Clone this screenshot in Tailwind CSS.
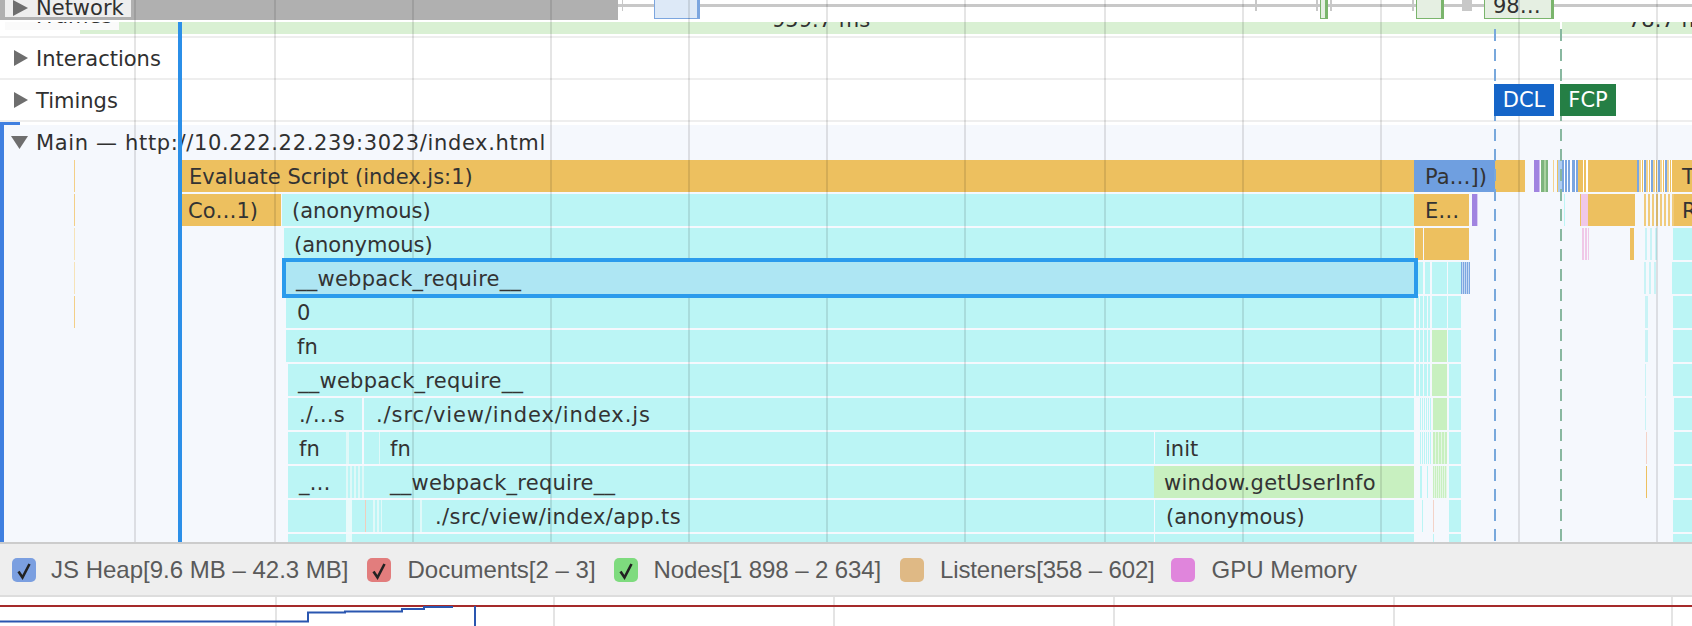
<!DOCTYPE html>
<html lang="en">
<head>
    <meta charset="UTF-8">
    <title>Performance</title>
    <script src="https://cdn.jsdelivr.net/npm/@tailwindcss/browser@4"></script>
</head>
<body class="bg-white">
<div class="w-[1692px] h-[626px] overflow-hidden flex flex-col [font-family:'DejaVu_Sans',sans-serif] text-[#303030]">

    <!-- tracks -->
    <div class="relative h-[542px] overflow-hidden shrink-0">

        <!-- overview strip -->
        <div class="relative h-5 mb-0.5 flex">
            <div class="w-[618px] h-5 bg-[#b0b0b0]">
                <div class="ml-[5px] w-[126px] h-[18px] bg-[#eeeeee] overflow-hidden flex items-center pl-2 -mt-px">
                    <svg class="shrink-0" width="15" height="16" viewBox="0 0 15 16"><path d="M0 0 L15 8 L0 16 Z" fill="#6e6e6e"/></svg>
                    <span class="ml-[8px] text-[21px] leading-5">Network</span>
                </div>
            </div>
            <div class="absolute left-[618px] right-0 top-1 h-[3px] bg-[#c8c8c8]"></div>
            <div class="absolute left-[654px] top-0 w-[46px] h-[19px] bg-[#dde9f7] border border-t-0 border-[#7ca6df] border-r-[3px]"></div>
            <div class="absolute left-[622px] top-0 w-px h-[11px] bg-[#c8c8c8]"></div>
            <div class="absolute left-[1255px] top-0 w-0.5 h-[11px] bg-[#c8c8c8]"></div>
            <div class="absolute left-[1316px] top-0 w-0.5 h-[11px] bg-[#c8c8c8]"></div>
            <div class="absolute left-[1320px] top-0 w-2 h-[19px] bg-[#e5efe2] border border-t-0 border-[#7ab56c] border-r-[3px]"></div>
            <div class="absolute left-[1330px] top-0 w-0.5 h-[11px] bg-[#c8c8c8]"></div>
            <div class="absolute left-[1412px] top-0 w-0.5 h-[11px] bg-[#c8c8c8]"></div>
            <div class="absolute left-[1416px] top-0 w-7 h-[19px] bg-[#e5efe2] border border-t-0 border-[#7ab56c] border-r-[3px]"></div>
            <div class="absolute left-[1462px] top-0 w-2.5 h-[11px] bg-[#c8c8c8]"></div>
            <div class="absolute left-[1484px] top-0 w-[70px] h-[19px] bg-[#e5efe2] border border-t-0 border-[#7ab56c] border-r-[3px] overflow-hidden pl-2 text-[21px] leading-[12px]">98…</div>
        </div>

        <!-- frames -->
        <div class="relative h-3 mb-0.5 flex overflow-hidden">
            <div class="ml-[80px] w-[1480px] bg-[#d9f0d3] relative overflow-hidden">
                <span class="absolute left-[692px] -top-[14px] text-[21px] leading-[24px]">959.7 ms</span>
            </div>
            <div class="ml-0.5 flex-1 bg-[#d9f0d3] relative overflow-hidden">
                <span class="absolute left-[66px] -top-[14px] text-[21px] leading-[24px] whitespace-nowrap">78.7 ms</span>
            </div>
            <div class="absolute left-[5px] top-0 w-[114px] h-2 bg-[#fafafa] overflow-hidden pl-[31px]">
                <span class="block -mt-[18px] text-[21px] leading-[24px]">Frames</span>
            </div>
        </div>
        <div class="h-0.5 bg-[#eeeeee]"></div>

        <div class="h-10 flex items-center pl-3.5 text-[21px] border-b-2 border-[#eeeeee] box-content">
            <svg width="14" height="16" viewBox="0 0 14 16"><path d="M0 0 L14 8 L0 16 Z" fill="#6e6e6e"/></svg>
            <span class="ml-2 pt-1">Interactions</span>
        </div>
        <div class="h-10 flex items-center text-[21px] border-b-2 border-[#eeeeee] box-content">
            <div class="w-[1494px] pl-3.5 flex items-center shrink-0">
                <svg width="14" height="16" viewBox="0 0 14 16"><path d="M0 0 L14 8 L0 16 Z" fill="#6e6e6e"/></svg>
                <span class="ml-2 pt-1">Timings</span>
            </div>
            <div class="relative z-10 w-[60px] h-8 bg-[#1565c8] text-white text-center leading-8">DCL</div>
            <div class="relative z-10 ml-1.5 w-[56px] h-8 bg-[#257f45] text-white text-center leading-8">FCP</div>
        </div>

        <!-- main thread -->
        <div class="mt-[3px] bg-[#f5f8fd] h-[417px] text-[21px] text-[#333333]">
            <div class="h-[35px] flex items-center pl-[11px] text-[#303030]">
                <svg width="17" height="13" viewBox="0 0 17 13"><path d="M0 0 L17 0 L8.5 13 Z" fill="#6e6e6e"/></svg>
                <span class="ml-2 pt-0.5 tracking-[0.65px]">Main — http://10.222.22.239:3023/index.html</span>
            </div>

            <div class="flex h-8 mb-0.5 leading-[34px]">
                <div class="ml-[74px] w-px bg-[#f3cf87]"></div>
                <div class="ml-[107px] w-[1232px] bg-[#edc05f] pl-[7px]">Evaluate Script (index.js:1)</div>
                <div class="w-[81px] bg-[#6f9fe0] pl-[11px]">Pa…])</div>
                <div class="w-[30px] bg-[#edc05f]"></div>
                <div class="ml-[9px] w-[5px] bg-[#a084e0]"></div>
                <div class="w-[49px] bg-[linear-gradient(90deg,#cdbdf0_0_1px,#fff_1px_2px,#7db47d_2px_5px,#a9d2a0_5px_7px,#7db47d_7px_9px,#f5f8fd_9px_14px,#f3d48f_14px_15px,#f5f8fd_15px_18px,#edc05f_18px_19px,#aecdf0_19px_23px,#7ba6e0_23px_25px,#fff_25px_26px,#7ba6e0_26px_28px,#fff_28px_29px,#7ba6e0_29px_31px,#fff_31px_33px,#7ba6e0_33px_36px,#fff_36px_37px,#7ba6e0_37px_39px,#edc05f_39px_44px,#fff_44px_45px,#edc05f_45px_47px,#fff_47px_49px)]"></div>
                <div class="w-[49px] bg-[#edc05f]"></div>
                <div class="w-[35px] bg-[repeating-linear-gradient(90deg,#7ba6e0_0_2px,#f3d48f_2px_4px,#fff_4px_5px,#edc05f_5px_6px,#fff_6px_7px)]"></div>
                <div class="flex-1 bg-[#edc05f] pl-2.5 overflow-hidden">T</div>
            </div>

            <div class="flex h-8 mb-0.5 leading-[34px]">
                <div class="ml-[74px] w-px bg-[#f3cf87]"></div>
                <div class="ml-[107px] w-[99px] bg-[#edc05f] pl-[6px]">Co…1)</div>
                <div class="ml-px w-[1132px] bg-[#bbf5f5] pl-[10px]">(anonymous)</div>
                <div class="w-[55px] bg-[#edc05f] pl-[11px]">E…</div>
                <div class="ml-[3px] w-[5px] bg-[#a084e0]"></div>
                <div class="w-px bg-[#d9ccf3]"></div>
                <div class="ml-[86px] w-px bg-[#bbf5f5]"></div>
                <div class="ml-[15px] w-px bg-[#edc05f]"></div>
                <div class="w-[7px] bg-[#f0c8e8]"></div>
                <div class="w-[47px] bg-[#edc05f]"></div>
                <div class="ml-[9px] w-[30px] bg-[repeating-linear-gradient(90deg,#f0cb7c_0_2px,#f5f8fd_2px_4px)]"></div>
                <div class="flex-1 bg-[#edc05f] pl-2 overflow-hidden">R</div>
            </div>

            <div class="flex h-8 mb-0.5 leading-[34px]">
                <div class="ml-[74px] w-px bg-[#f6e3b8]"></div>
                <div class="ml-[209px] w-[1130px] bg-[#bbf5f5] pl-[10px]">(anonymous)</div>
                <div class="ml-px w-2 bg-[#edc05f]"></div>
                <div class="ml-px w-[45px] bg-[#edc05f]"></div>
                <div class="ml-[113px] w-[7px] bg-[repeating-linear-gradient(90deg,#f0c8e8_0_2px,#f5f8fd_2px_3px)]"></div>
                <div class="ml-[41px] w-1 bg-[#edc05f]"></div>
                <div class="ml-[11px] w-[15px] bg-[repeating-linear-gradient(90deg,#c9f3f6_0_2px,#f5f8fd_2px_5px)]"></div>
                <div class="ml-[13px] flex-1 bg-[#bbf5f5]"></div>
            </div>

            <!-- selected entry -->
            <div class="flex h-8 mb-0.5 leading-[34px]">
                <div class="ml-[74px] w-px bg-[#f6e3b8]"></div>
                <div class="relative z-10 ml-[211px] w-[1128px] bg-[#aee6f3] outline-4 outline-[#2b9bec] pl-[10px] tracking-[0.25px]">__webpack_require__</div>
                <div class="ml-1 w-3.5 bg-[repeating-linear-gradient(90deg,#bbf5f5_0_5px,#f5f8fd_5px_7px)]"></div>
                <div class="w-[15px] bg-[#bbf5f5]"></div>
                <div class="ml-px w-[13px] bg-[#bbf5f5]"></div>
                <div class="w-[9px] bg-[repeating-linear-gradient(90deg,#7ba6e0_0_1px,#c5d8f3_1px_2px)]"></div>
                <div class="ml-[174px] w-[15px] bg-[repeating-linear-gradient(90deg,#c9f3f6_0_2px,#f5f8fd_2px_5px)]"></div>
                <div class="ml-[13px] flex-1 bg-[#bbf5f5]"></div>
            </div>

            <div class="flex h-8 mb-0.5 leading-[34px]">
                <div class="ml-[74px] w-px bg-[#f3cf87]"></div>
                <div class="ml-[211px] w-[1128px] bg-[#bbf5f5] pl-[11px]">0</div>
                <div class="ml-0.5 w-3.5 bg-[repeating-linear-gradient(90deg,#bbf5f5_0_3px,#f5f8fd_3px_4px)]"></div>
                <div class="ml-0.5 w-[15px] bg-[#bbf5f5]"></div>
                <div class="ml-px w-[13px] bg-[#bbf5f5]"></div>
                <div class="ml-[184px] w-[3px] bg-[#c9f3f6]"></div>
                <div class="ml-[25px] flex-1 bg-[#bbf5f5]"></div>
            </div>

            <div class="flex h-8 mb-0.5 leading-[34px]">
                <div class="ml-[286px] w-[1128px] bg-[#bbf5f5] pl-[11px]">fn</div>
                <div class="ml-0.5 w-3.5 bg-[repeating-linear-gradient(90deg,#bbf5f5_0_3px,#f5f8fd_3px_4px)]"></div>
                <div class="ml-0.5 w-[15px] bg-[#c8f0c0]"></div>
                <div class="ml-px w-[13px] bg-[#bbf5f5]"></div>
                <div class="ml-[184px] w-[3px] bg-[#c9f3f6]"></div>
                <div class="ml-[25px] flex-1 bg-[#bbf5f5]"></div>
            </div>

            <div class="flex h-8 mb-0.5 leading-[34px]">
                <div class="ml-[288px] w-[1126px] bg-[#bbf5f5] pl-[10px] tracking-[0.25px]">__webpack_require__</div>
                <div class="ml-0.5 w-3.5 bg-[repeating-linear-gradient(90deg,#bbf5f5_0_3px,#f5f8fd_3px_4px)]"></div>
                <div class="ml-0.5 w-[15px] bg-[#c8f0c0]"></div>
                <div class="ml-[2px] w-[12px] bg-[#bbf5f5]"></div>
                <div class="ml-[184px] w-px bg-[#c9f3f6]"></div>
                <div class="ml-[27px] flex-1 bg-[#bbf5f5]"></div>
            </div>

            <div class="flex h-8 mb-0.5 leading-[34px]">
                <div class="ml-[288px] w-[74px] bg-[#bbf5f5] pl-[11px]">./…s</div>
                <div class="ml-0.5 w-[1050px] bg-[#bbf5f5] pl-3 tracking-[0.9px]">./src/view/index/index.js</div>
                <div class="ml-1.5 w-[11px] bg-[repeating-linear-gradient(90deg,#bbf5f5_0_1px,#f5f8fd_1px_2px)]"></div>
                <div class="ml-[2px] w-[14px] bg-[#c8f0c0]"></div>
                <div class="ml-0.5 w-3 bg-[#bbf5f5]"></div>
                <div class="ml-[184px] w-px bg-[#c9f3f6]"></div>
                <div class="ml-[28px] flex-1 bg-[#bbf5f5]"></div>
            </div>

            <div class="flex h-8 mb-0.5 leading-[34px]">
                <div class="ml-[288px] w-[58px] bg-[#bbf5f5] pl-[11px]">fn</div>
                <div class="w-4 bg-[linear-gradient(90deg,#dff8f8_0_3px,#bbf5f5_3px_16px)]"></div>
                <div class="ml-0.5 w-[790px] bg-[linear-gradient(90deg,#bbf5f5_0_15px,#e0f9f9_15px_16px,#bbf5f5_16px_790px)] pl-[26px]">fn</div>
                <div class="ml-px w-[259px] bg-[#bbf5f5] pl-2.5">init</div>
                <div class="ml-1.5 w-[11px] bg-[repeating-linear-gradient(90deg,#bbf5f5_0_1px,#f5f8fd_1px_2px)]"></div>
                <div class="ml-[2px] w-[14px] bg-[repeating-linear-gradient(90deg,#c8f0c0_0_2px,#e4f7e4_2px_3px)]"></div>
                <div class="ml-0.5 w-3 bg-[#bbf5f5]"></div>
                <div class="ml-[185px] w-px bg-[#f4d3c8]"></div>
                <div class="ml-[27px] flex-1 bg-[#bbf5f5]"></div>
            </div>

            <div class="flex h-8 mb-0.5 leading-[34px]">
                <div class="ml-[288px] w-[58px] bg-[#bbf5f5] pl-[11px]">_…</div>
                <div class="w-[18px] bg-[repeating-linear-gradient(90deg,#dff8f8_0_2px,#bbf5f5_2px_4px)]"></div>
                <div class="w-[790px] bg-[#bbf5f5] pl-[26px] tracking-[0.25px]">__webpack_require__</div>
                <div class="w-[260px] bg-[#c8f0c0] pl-2.5 tracking-[0.3px]">window.getUserInfo</div>
                <div class="ml-1.5 w-[11px] bg-[linear-gradient(90deg,#bbf5f5_0_2px,#f5f8fd_2px_7px,#bbf5f5_7px_8px,#f5f8fd_8px_11px)]"></div>
                <div class="ml-[2px] w-[14px] bg-[repeating-linear-gradient(90deg,#c8f0c0_0_1px,#e4f7e4_1px_2px)]"></div>
                <div class="ml-0.5 w-3 bg-[#bbf5f5]"></div>
                <div class="ml-[185px] w-px bg-[#edc05f]"></div>
                <div class="ml-[27px] flex-1 bg-[#bbf5f5]"></div>
            </div>

            <div class="flex h-8 mb-0.5 leading-[34px]">
                <div class="ml-[288px] w-[58px] bg-[#bbf5f5]"></div>
                <div class="w-1.5 bg-[#e8fbfb]"></div>
                <div class="w-[802px] bg-[linear-gradient(90deg,#bbf5f5_0_13px,#f0cdbc_13px_14px,#bbf5f5_14px_21px,#e0f9f9_21px_23px,#bbf5f5_23px_25px,#e0f9f9_25px_27px,#bbf5f5_27px_29px,#e0f9f9_29px_30px,#bbf5f5_30px_68px,#e0f9f9_68px_70px,#bbf5f5_70px_802px)] pl-[83px] tracking-[0.4px]">./src/view/index/app.ts</div>
                <div class="ml-px w-[259px] bg-[#bbf5f5] pl-[11px]">(anonymous)</div>
                <div class="ml-2 w-px bg-[#bbf5f5]"></div>
                <div class="ml-2.5 w-px bg-[#f4d3c8]"></div>
                <div class="ml-[15px] w-3 bg-[#bbf5f5]"></div>
                <div class="ml-[212px] flex-1 bg-[#bbf5f5]"></div>
            </div>

            <div class="flex h-8 leading-[34px]">
                <div class="ml-[288px] w-[58px] bg-[#bbf5f5]"></div>
                <div class="w-1.5 bg-[#e8fbfb]"></div>
                <div class="w-[802px] bg-[#bbf5f5] pl-[83px]">fn</div>
                <div class="ml-px w-[259px] bg-[#bbf5f5] pl-[11px]">userInfo.init</div>
                <div class="ml-[19px] w-px bg-[#bbf5f5]"></div>
                <div class="ml-[15px] w-3 bg-[#bbf5f5]"></div>
                <div class="ml-[212px] flex-1 bg-[#bbf5f5]"></div>
            </div>
        </div>

        <!-- grid lines over the tracks -->
        <div class="absolute inset-0 flex pointer-events-none">
            <div class="ml-[134px] w-0.5 bg-black/10"></div>
            <div class="ml-[138px] w-0.5 bg-black/10"></div>
            <div class="ml-[136px] w-0.5 bg-black/10"></div>
            <div class="ml-[136px] w-0.5 bg-black/10"></div>
            <div class="ml-[136px] w-0.5 bg-black/10"></div>
            <div class="ml-[136px] w-0.5 bg-black/10"></div>
            <div class="ml-[136px] w-0.5 bg-black/10"></div>
            <div class="ml-[138px] w-0.5 bg-black/10"></div>
            <div class="ml-[136px] w-0.5 bg-black/10"></div>
            <div class="ml-[136px] w-0.5 bg-black/10"></div>
            <div class="ml-[136px] w-0.5 bg-black/10"></div>
            <div class="ml-[136px] w-0.5 bg-black/10"></div>
        </div>

        <!-- event markers -->
        <div class="absolute left-[1494px] top-[29px] bottom-0 w-0.5 bg-[repeating-linear-gradient(180deg,#78a8dc_0_12px,transparent_12px_20px)]"></div>
        <div class="absolute left-[1560px] top-[29px] bottom-0 w-0.5 bg-[repeating-linear-gradient(180deg,#88b8a0_0_12px,transparent_12px_20px)]"></div>

        <!-- group bracket and selection line -->
        <div class="absolute left-0 top-[122px] bottom-0 w-1 bg-[#3f7fe0]"></div>
        <div class="absolute left-0 top-[122px] w-5 h-[3px] bg-[#3f7fe0]"></div>
        <div class="absolute left-[178px] top-[22px] bottom-0 w-1 bg-[#2b8fe8]"></div>
    </div>

    <!-- counters legend -->
    <div class="h-[55px] shrink-0 bg-[#eeeeee] border-t-2 border-[#cccccc] border-b-2 border-b-[#dddddd] flex items-center pl-3 [font-family:'Liberation_Sans',sans-serif] text-[24px] text-[#5a5a5a]">
        <div class="w-6 h-6 rounded-[5px] bg-[#7b9fe0] shrink-0">
            <svg width="24" height="24" viewBox="0 0 24 24"><path d="M6.5 13.5 L10.5 19.5 L17.5 6" fill="none" stroke="#222222" stroke-width="2.6"/></svg>
        </div>
        <span class="ml-[15px]">JS Heap[9.6 MB – 42.3 MB]</span>
        <div class="ml-[19px] w-6 h-6 rounded-[5px] bg-[#e27d7d] shrink-0">
            <svg width="24" height="24" viewBox="0 0 24 24"><path d="M6.5 13.5 L10.5 19.5 L17.5 6" fill="none" stroke="#222222" stroke-width="2.6"/></svg>
        </div>
        <span class="ml-4">Documents[2 – 3]</span>
        <div class="ml-[18px] w-6 h-6 rounded-[5px] bg-[#7edb7e] shrink-0">
            <svg width="24" height="24" viewBox="0 0 24 24"><path d="M6.5 13.5 L10.5 19.5 L17.5 6" fill="none" stroke="#222222" stroke-width="2.6"/></svg>
        </div>
        <span class="ml-4 tracking-[-0.1px]">Nodes[1 898 – 2 634]</span>
        <div class="ml-[19px] w-6 h-6 rounded-[5px] bg-[#dfb985] shrink-0"></div>
        <span class="ml-4 tracking-[-0.15px]">Listeners[358 – 602]</span>
        <div class="ml-4 w-6 h-6 rounded-[5px] bg-[#e085dc] shrink-0"></div>
        <span class="ml-[17px]">GPU Memory</span>
    </div>

    <!-- counters graph -->
    <svg class="block shrink-0" width="1692" height="29" viewBox="0 0 1692 29">
        <g fill="#e4e4e4">
            <rect x="275" y="0" width="2" height="29"/>
            <rect x="553" y="0" width="2" height="29"/>
            <rect x="833" y="0" width="2" height="29"/>
            <rect x="1113" y="0" width="2" height="29"/>
            <rect x="1393" y="0" width="2" height="29"/>
            <rect x="1671" y="0" width="2" height="29"/>
        </g>
        <rect x="0" y="8" width="1692" height="2" fill="#a52a2a"/>
        <path d="M0 24.5 H308 V15.5 H345 V14.5 H402 V12 H424 V10 H453" fill="none" stroke="#2a56b0" stroke-width="2"/>
        <rect x="474" y="9" width="2" height="20" fill="#2a56b0"/>
    </svg>
</div>
</body>
</html>
